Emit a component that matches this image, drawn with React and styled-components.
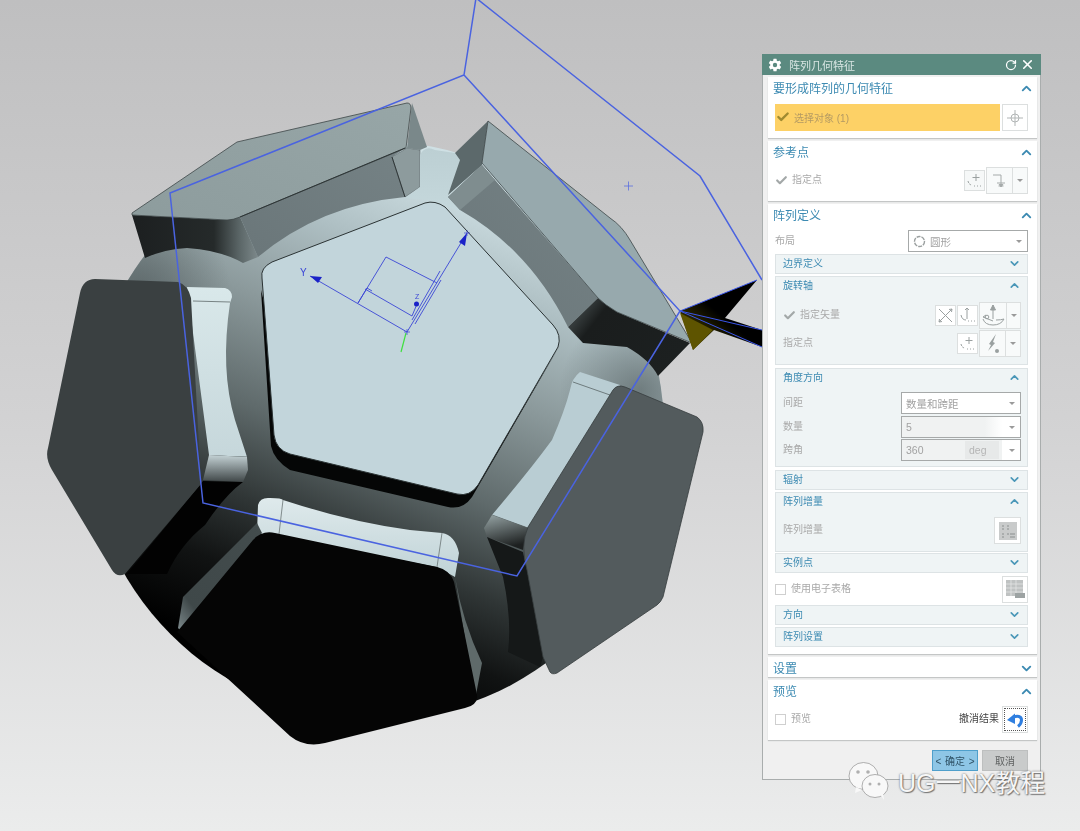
import React from 'react'
import styled, { createGlobalStyle } from 'styled-components'
import { ChevronUp, ChevronDown, RotateCw, X, Check } from 'lucide-react'
import { IoSettingsSharp } from 'react-icons/io5'

const Global = createGlobalStyle`
  html, body { margin: 0; padding: 0; }
  body { font-family: "Liberation Sans", "Noto Sans CJK SC", sans-serif; }
`

const Stage = styled.div`
  position: relative;
  width: 1080px;
  height: 831px;
  overflow: hidden;
  background: linear-gradient(180deg, #bfbfc0 0%, #d2d2d3 50%, #ebecec 100%);
`
const Scene = styled.svg`
  display: block;
  width: 1080px;
  height: 831px;
  filter: blur(0.4px);
`
const Dialog = styled.div`
  position: absolute;
  left: 762px;
  top: 54px;
  width: 279px;
  height: 726px;
  box-sizing: border-box;
  display: flex;
  flex-direction: column;
  background: #f0f0f0;
  border: 1px solid #a9adad;
  border-top: 0;
  filter: blur(0.3px);
`
const TitleBar = styled.div`
  height: 21px;
  flex: none;
  margin: 0 -1px;
  background: #5b8a80;
  display: flex;
  align-items: center;
  padding: 0 6px;
  color: #d9e6e3;
  font-size: 11px;
`
const TitleText = styled.span`
  margin-left: 7px;
  flex: 1;
`
const CloseIcon = styled(X)`
  margin-left: 3px;
`
const Body = styled.div`
  display: flex;
  flex-direction: column;
  gap: 3px;
  padding: 2px 3px 0 5px;
`
const SectionBox = styled.div`
  height: ${p => p.$h}px;
  box-sizing: border-box;
  background: #fff;
  box-shadow: 0 1px 1px #c4c6c6;
  padding: 0 9px 0 7px;
`
const SectionHead = styled.div`
  height: 23px;
  display: flex;
  align-items: center;
  justify-content: space-between;
  margin: 0 -6px 0 -2px;
  color: #3c8ab2;
  font-size: 12px;
`
const HeadText = styled.span`
  padding-bottom: 2px;
`
const SubBox = styled.div`
  height: ${p => p.$h}px;
  box-sizing: border-box;
  background: #eff4f5;
  border: 1px solid #dde3e5;
  padding: 0 6px 0 7px;
  margin-bottom: ${p => p.$gap ?? 2}px;
`
const SubHead = styled.div`
  height: 17px;
  display: flex;
  align-items: center;
  justify-content: space-between;
  color: #3c8ab2;
  font-size: 10px;
`
const SubTitle = styled.span`
  line-height: 1;
`
const Row = styled.div`
  display: flex;
  align-items: center;
  justify-content: space-between;
  height: ${p => p.$h || 22}px;
  margin-top: ${p => p.$top || 0}px;
  margin-bottom: ${p => p.$bottom || 0}px;
`
const Group = styled.div`
  display: flex;
  align-items: center;
  gap: ${p => p.$gap || 1}px;
`
const Label = styled.span`
  font-size: 10px;
  line-height: 1;
  padding-bottom: 1px;
  color: ${p => p.$dark ? '#444' : '#a9a9a9'};
`
const Highlight = styled.div`
  flex: 1;
  height: 27px;
  background: #fdd166;
  display: flex;
  align-items: center;
  gap: 4px;
  padding-left: 1px;
  padding-bottom: 1px;
  box-sizing: border-box;
  font-size: 10px;
  color: #b49a63;
`
const IconBtn = styled.div`
  width: ${p => p.$w || 21}px;
  height: ${p => p.$s || 21}px;
  box-sizing: border-box;
  display: flex;
  align-items: center;
  justify-content: center;
  background: ${p => p.$bg || '#f6f8f8'};
  border: 1px solid #dcdfdf;
`
const BigBtn = styled(IconBtn)`
  width: 26px;
  height: 27px;
  flex: none;
  background: #fff;
  margin-left: 2px;
`
const DottedBtn = styled(BigBtn)`
  outline: 1px dotted #555;
  outline-offset: -3px;
`
const Split = styled.div`
  display: flex;
  width: ${p => p.$w || 42}px;
  height: 27px;
  box-sizing: border-box;
  background: #f8fafa;
  border: 1px solid #dcdfdf;
`
const SplitMain = styled.div`
  flex: 1;
  display: flex;
  align-items: center;
  justify-content: center;
  border-right: 1px solid #dcdfdf;
`
const SplitArrow = styled.div`
  width: 14px;
  display: flex;
  align-items: center;
  justify-content: center;
`
const Caret = styled.span`
  width: 0;
  height: 0;
  border-left: 3px solid transparent;
  border-right: 3px solid transparent;
  border-top: 3px solid #9a9a9a;
`
const Select = styled.div`
  width: ${p => p.$w || 120}px;
  height: ${p => p.$h || 22}px;
  box-sizing: border-box;
  display: flex;
  align-items: center;
  background: ${p => p.$bg || '#fff'};
  border: 1px solid #a6a9a9;
  padding: 0 5px 0 4px;
  font-size: 10.5px;
  color: #a2a2a2;
  gap: 4px;
`
const SelectText = styled.span`
  flex: 1;
`
const Unit = styled.span`
  width: 34px;
  height: 18px;
  line-height: 18px;
  background: #e7e9e9;
  color: #b5b5b5;
  margin-right: 6px;
  padding-left: 4px;
  box-sizing: border-box;
`
const Box = styled.span`
  width: 11px;
  height: 11px;
  box-sizing: border-box;
  background: #fff;
  border: 1px solid #cfcfcf;
  margin-right: 4px;
  flex: none;
`
const Footer = styled.div`
  display: flex;
  justify-content: flex-end;
  gap: 4px;
  margin: 10px 12px 0 0;
`
const DlgButton = styled.div`
  width: 46px;
  height: 21px;
  box-sizing: border-box;
  display: flex;
  align-items: center;
  justify-content: center;
  font-size: 10px;
  color: ${p => p.$primary ? '#2f5266' : '#5f6262'};
  background: ${p => p.$primary ? '#8ec6e6' : '#c9cbcb'};
  border: 1px solid ${p => p.$primary ? '#4f9fcb' : '#bdbfbf'};
  word-spacing: 1px;
`
const Watermark = styled.div`
  position: absolute;
  left: 848px;
  top: 761px;
  display: flex;
  align-items: center;
  gap: 9px;
  font-size: 25px;
  color: #f6f6f6;
  text-shadow: 0 0 2px #5f5f5f, 1px 1px 1px #7d7d7d;
`
const WatermarkIcon = styled.svg`
  width: 41px;
  height: 40px;
  flex: none;
`

const Up = () => <ChevronUp size={15} strokeWidth={3} color="#3c8ab2" />
const Down = () => <ChevronDown size={15} strokeWidth={3} color="#3c8ab2" />
const SubUp = () => <ChevronUp size={13} strokeWidth={3} color="#4a97b8" />
const SubDown = () => <ChevronDown size={13} strokeWidth={3} color="#4a97b8" />

const PointIcon = () => (
  <svg width="17" height="17" viewBox="0 0 17 17" fill="none" stroke="#9aa0a0" strokeWidth="1">
    <path d="M10 2v7M6.500 5.500h7" />
    <path d="M2 9q1 4 4 4M8 14h1M11 14h1M14 14h1" strokeDasharray="2 1" />
  </svg>
)
const CrossIcon = () => (
  <svg width="18" height="18" viewBox="0 0 18 18" fill="none" stroke="#b1b5b5" strokeWidth="1">
    <circle cx="9" cy="9" r="4" />
    <path d="M9 1v16M1 9h16" />
  </svg>
)
const ArrowDownIcon = () => (
  <svg width="18" height="18" viewBox="0 0 18 18" fill="none" stroke="#a5aaaa" strokeWidth="1">
    <path d="M2 3h8v9M6 11h8M7.500 14h5" />
    <path d="M8 12l2 3 2-3" fill="#a5aaaa" />
  </svg>
)
const ScissorIcon = () => (
  <svg width="15" height="15" viewBox="0 0 15 15" fill="none" stroke="#9aa0a0" strokeWidth="1">
    <path d="M1 1l13 13M14 1L1 14" />
    <path d="M14 1l-3 .5M14 1l-.5 3M1 14l3-.5M1 14l.5-3" />
  </svg>
)
const AxisIcon = () => (
  <svg width="17" height="17" viewBox="0 0 17 17" fill="none" stroke="#9aa0a0" strokeWidth="1">
    <path d="M8 1v11M6 3l2-2 2 2" />
    <path d="M2 8q1 5 5 5M9 14h1M12 14h1M15 14h1" />
  </svg>
)
const VectorIcon = () => (
  <svg width="26" height="24" viewBox="0 0 26 24" fill="none" stroke="#9aa0a0" strokeWidth="1">
    <path d="M13 1v14" />
    <path d="M10.500 6L13 1l2.500 5z" fill="#9aa0a0" />
    <path d="M3 13l10 4M3 13l3-2" />
    <path d="M3 15q2 6 10 6t11-6q-3 1-8 1" />
    <circle cx="7" cy="13" r="1.800" />
  </svg>
)
const PenIcon = () => (
  <svg width="20" height="22" viewBox="0 0 20 22" fill="#9aa0a0">
    <path d="M13 1L6 11l2 1-3 6 7-8-2-1z" />
    <circle cx="14" cy="18" r="2" />
  </svg>
)
const GridIcon = () => (
  <svg width="20" height="20" viewBox="0 0 20 20">
    <rect x="1" y="1" width="18" height="18" fill="#c9cbcb" />
    <path d="M4 5h2M4 8h2M9 5h2M9 8h2M4 13h2M4 16h2M9 13h2M12 16h5M12 13h5" stroke="#a0a4a4" strokeWidth="1.500" />
  </svg>
)
const SheetIcon = () => (
  <svg width="22" height="22" viewBox="0 0 22 22">
    <rect x="2" y="2" width="17" height="16" fill="#bfc2c2" />
    <path d="M2 6h17M2 10h17M2 14h17M7 2v16M12 2v16" stroke="#e3e5e5" strokeWidth="0.800" />
    <path d="M11 15h10v5H11z" fill="#9da3a3" />
  </svg>
)
const UndoIcon = () => (
  <svg width="18" height="16" viewBox="0 0 18 16">
    <path d="M8 5C11 3.500 15.500 4 15.500 8C15.500 11 14 13 12 14.500" fill="none" stroke="#2f7fe0" strokeWidth="3" />
    <path d="M1 8L9 1.500V12z" fill="#2f7fe0" />
  </svg>
)
const RingIcon = () => (
  <svg width="13" height="13" viewBox="0 0 13 13" fill="none">
    <circle cx="6.500" cy="6.500" r="5" stroke="#9a9f9f" strokeWidth="1.400" strokeDasharray="4 1" />
  </svg>
)

const Section = ({ title, open, h, children }) => (
  <SectionBox $h={h}>
    <SectionHead>
      <HeadText>{title}</HeadText>
      {open ? <Up /> : <Down />}
    </SectionHead>
    {children}
  </SectionBox>
)

const Sub = ({ title, open, h, gap, children }) => (
  <SubBox $h={h} $gap={gap}>
    <SubHead>
      <SubTitle>{title}</SubTitle>
      {open ? <SubUp /> : <SubDown />}
    </SubHead>
    {children}
  </SubBox>
)

const SplitBtn = ({ children }) => (
  <Split>
    <SplitMain>{children}</SplitMain>
    <SplitArrow><Caret /></SplitArrow>
  </Split>
)

const GreyCheck = () => <Check size={13} strokeWidth={4} color="#a3a8a8" />

const Model = () => (
  <Scene viewBox="0 0 1080 831">
    <defs>
      <linearGradient id="ball" gradientUnits="userSpaceOnUse" x1="500" y1="200" x2="300" y2="680">
        <stop offset="0" stopColor="#cfe0e4" />
        <stop offset="0.17" stopColor="#aebfc3" />
        <stop offset="0.35" stopColor="#8b999b" />
        <stop offset="0.55" stopColor="#5f6a6b" />
        <stop offset="0.72" stopColor="#2f3535" />
        <stop offset="0.85" stopColor="#111313" />
        <stop offset="1" stopColor="#000" />
      </linearGradient>
      <radialGradient id="rim" gradientUnits="userSpaceOnUse" cx="640" cy="390" r="80">
        <stop offset="0" stopColor="#5f6b6d" stopOpacity="0.75" />
        <stop offset="1" stopColor="#5f6b6d" stopOpacity="0" />
      </radialGradient>
      <radialGradient id="rimLeft" gradientUnits="userSpaceOnUse" cx="140" cy="290" r="90">
        <stop offset="0" stopColor="#596466" stopOpacity="0.8" />
        <stop offset="1" stopColor="#596466" stopOpacity="0" />
      </radialGradient>
      <linearGradient id="topFace" x1="0" y1="1" x2="1" y2="0">
        <stop offset="0" stopColor="#8d9c9d" />
        <stop offset="1" stopColor="#97a6a7" />
      </linearGradient>
      <linearGradient id="darkWall" x1="0" y1="0" x2="1" y2="0">
        <stop offset="0" stopColor="#1c1f20" />
        <stop offset="0.65" stopColor="#252a2a" />
        <stop offset="0.85" stopColor="#5a6566" />
        <stop offset="1" stopColor="#7d898b" />
      </linearGradient>
      <linearGradient id="innerWall" x1="0" y1="1" x2="1" y2="0">
        <stop offset="0" stopColor="#6a7679" />
        <stop offset="1" stopColor="#758285" />
      </linearGradient>
      <linearGradient id="leftWall" x1="0" y1="0" x2="0" y2="1">
        <stop offset="0" stopColor="#d9e8ea" />
        <stop offset="1" stopColor="#c6d7db" />
      </linearGradient>
      <linearGradient id="fadeWall" x1="0" y1="0" x2="0" y2="1">
        <stop offset="0" stopColor="#c4d2d5" />
        <stop offset="1" stopColor="#3f4647" />
      </linearGradient>
      <linearGradient id="fadeWall2" x1="0" y1="0" x2="0.3" y2="1">
        <stop offset="0" stopColor="#97a5a6" />
        <stop offset="1" stopColor="#1d2020" />
      </linearGradient>
      <linearGradient id="sideDark" x1="0" y1="0" x2="1" y2="0.5">
        <stop offset="0" stopColor="#566061" />
        <stop offset="0.3" stopColor="#1a1d1d" />
        <stop offset="1" stopColor="#1c2020" />
      </linearGradient>
      <linearGradient id="botWall" x1="0" y1="0" x2="0" y2="1">
        <stop offset="0" stopColor="#dfeaec" />
        <stop offset="1" stopColor="#bfd2d6" />
      </linearGradient>
      <linearGradient id="botLeft" x1="1" y1="0" x2="0" y2="1">
        <stop offset="0" stopColor="#434c4d" />
        <stop offset="0.8" stopColor="#3f4849" />
        <stop offset="1" stopColor="#7d8a8c" />
      </linearGradient>
      <linearGradient id="neck" x1="0" y1="0" x2="0" y2="1">
        <stop offset="0" stopColor="#bccfd3" />
        <stop offset="1" stopColor="#c5d8dc" />
      </linearGradient>
      <linearGradient id="spike" x1="0" y1="1" x2="1" y2="0">
        <stop offset="0" stopColor="#5e5400" />
        <stop offset="0.5" stopColor="#000" />
        <stop offset="1" stopColor="#000" />
      </linearGradient>
    </defs>

    {/* sphere */}
    <circle cx="375" cy="430" r="289" fill="url(#ball)" />
    <circle cx="375" cy="430" r="289" fill="url(#rim)" />
    <circle cx="375" cy="430" r="289" fill="url(#rimLeft)" />

    {/* top left block */}
    <path d="M132 215 L227 220 L240 217 L258 257 L243 263 Q220 250 187 248 Q165 249 145 258 Z" fill="url(#darkWall)" />
    <path d="M240 217 L405 148 L392 157 L405 197 Q320 205 258 257 Z" fill="url(#innerWall)" />
    <path d="M392 157 L407 148 L420 150 L420 187 L405 197 Z" fill="#8d9b9d" stroke="#3d4546" strokeWidth="0.4" />
    <path d="M407 148 L412 103 L427 147 L420 150 Z" fill="#7a888a" />
    <path d="M132 213 L237 142 L407 103 Q411 103 411 108 L406 148 L240 217 Q233 220 227 220 L132 215 Z" fill="url(#topFace)" stroke="#3e4647" strokeWidth="0.8" />
    <path d="M240 217 L405 148 M392 157 L405 197" stroke="#2e3536" strokeWidth="1" fill="none" />

    {/* neck between the two top blocks */}
    <path d="M420 187 L420 155 Q425 145 435 150 L455 153 L460 160 Q457 175 448 195 L462 212 L430 200 L405 198 Z" fill="url(#neck)" />

    {/* top right block */}
    <path d="M482 165 L598 298 L568 327 Q530 250 460 210 L448 197 Z" fill="url(#innerWall)" />
    <path d="M488 121 L455 153 L460 160 L448 195 L482 165 Z" fill="#5c696b" />
    <path d="M482 165 L448 197 L460 210 L495 180 Z" fill="#7f8d8f" />
    <path d="M598 298 L617 312 L690 343 L658 376 Q650 360 627 347 L583 343 L568 327 Z" fill="url(#sideDark)" />
    <path d="M488 121 L610 218 Q622 226 630 240 L692 343 L617 312 Q605 305 598 298 L482 163 Z" fill="#97a9ad" stroke="#3e4647" strokeWidth="0.8" />

    {/* centre pentagon with its recess */}
    <path d="M261 290 L271 446 Q274 460 290 470 L448 507 Q463 510 472 497 L560 345 L480 480 L300 445 Z" fill="#050606" />
    <path d="M262 278 Q260 268 272 262 L425 203 Q435 200 445 207 L553 325 Q562 335 558 347 L478 485 Q470 497 457 494 L290 454 Q276 450 274 435 Z" fill="#c2d5db" stroke="#2b3334" strokeWidth="1" />

    {/* left block */}
    <path d="M187 287 L225 288 Q232 290 232 297 L230 303 Q220 370 235 420 L247 457 L209 455 Z" fill="url(#leftWall)" />
    <path d="M193 301 L230 302 M209 456 L247 457" stroke="#4e5758" strokeWidth="0.7" fill="none" />
    <path d="M209 455 L247 457 L248 470 L243 482 L203 480 Z" fill="url(#fadeWall)" />
    <path d="M203 481 L243 482 Q225 495 205 525 Q180 545 167 574 L127 574 Z" fill="#020202" />
    <path d="M80 293 Q83 279 95 279 L178 282 Q188 285 191 298 L201 484 L125 574 Q117 578 112 570 L52 470 Q45 458 48 448 Z" fill="#3a4041" />

    {/* right block */}
    <path d="M580 372 L620 385 L528 528 L492 515 Q530 470 552 440 Q565 410 570 390 Q572 378 580 372 Z" fill="#b9cdd3" />
    <path d="M573 382 L610 395 M492 515 L528 528" stroke="#4e5758" strokeWidth="0.7" fill="none" />
    <path d="M492 515 L528 528 L523 550 L487 537 L484 528 Z" fill="url(#fadeWall2)" />
    <path d="M487 537 L523 552 L527 570 L543 657 L540 667 L508 652 Q512 620 503 577 Z" fill="#151818" />
    <path d="M613 390 Q617 384 625 387 L697 417 Q704 422 703 432 L663 597 Q661 602 657 605 L557 673 Q552 675 550 672 L543 657 L527 570 Q520 545 528 527 Z" fill="#535b5d" stroke="#363c3d" strokeWidth="0.8" />

    {/* bottom block */}
    <path d="M257 533 L258 505 Q260 497 270 498 Q282 498 283 500 Q350 522 410 530 L442 533 Q455 535 459 553 L455 577 L437 567 Z" fill="url(#botWall)" />
    <path d="M283 500 L279 534 M442 533 L437 567" stroke="#5b6566" strokeWidth="0.7" fill="none" />
    <path d="M257 523 L262 533 L180 630 L178 628 L183 597 Z" fill="url(#botLeft)" />
    <path d="M455 577 Q462 620 482 663 L475 700 Z" fill="#5f6a6a" />
    <path d="M177 632 L253 540 Q262 530 275 533 L437 567 Q450 570 454 582 L477 695 Q478 705 465 708 L325 743 Q305 748 290 736 Z" fill="#050505" />

    {/* yellow preview spike */}
    <path d="M680 311 L757 280 L725 318 L762 330 L762 347 L714 330 L693 350 Z" fill="url(#spike)" />
    <path d="M680 313 L713 330 L693 350 Z" fill="#5e5400" />
    <path d="M680 311 L757 280 M680 311 L762 330 M680 311 L762 347" stroke="#3a55e8" strokeWidth="1" fill="none" />

    {/* blue preview outline */}
    <path d="M476 -2 L464 75 L170 193 L203 503 L517 576 L680 311 L464 75 M476 -2 L700 176 L762 280" fill="none" stroke="#4a63e0" strokeWidth="1.500" />
    <path d="M624 186h9M628.500 181.500v9" stroke="#5a6ee0" strokeWidth="0.800" />

    {/* datum csys */}
    <g fill="none" stroke="#3a45d6" strokeWidth="0.900">
      <path d="M407 332 L310 276" />
      <path d="M407 332 L467 233" />
      <path d="M358 303 L386 257 L437 283" />
      <path d="M365 289 L412 316" />
      <path d="M358 303 L367 288 L372 291" />
      <path d="M412 320 L440 271 M415 324 L441 280" />
      <path d="M412 316 L417 304" />
    </g>
    <path d="M310 276 L322 277 L318 283 Z" fill="#1a22c8" />
    <path d="M467 233 L465 246 L459 242 Z" fill="#1a22c8" />
    <path d="M414 304 a2.500 2.500 0 1 1 5 0 a2.500 2.500 0 1 1 -5 0" fill="#1a22c8" />
    <path d="M406 333 L401 352" stroke="#3fe03f" strokeWidth="1.200" />
    <text x="300" y="276" fontSize="10" fill="#3a45d6" fontFamily="Liberation Sans">Y</text>
    <text x="415" y="299" fontSize="7" fill="#3a45d6" fontFamily="Liberation Sans">Z</text>
    <path d="M464 233h6M467 230v6M404 332h6M407 329v6" stroke="#3a45d6" strokeWidth="0.700" />
  </Scene>
)

const App = () => (
  <Stage>
    <Global />
    <Model />
    <Dialog>
      <TitleBar>
        <IoSettingsSharp size={14} color="#fff" />
        <TitleText>阵列几何特征</TitleText>
        <RotateCw size={12} strokeWidth={2.500} color="#fff" />
        <CloseIcon size={15} strokeWidth={2.500} color="#fff" />
      </TitleBar>
      <Body>
        <Section title="要形成阵列的几何特征" open h={61}>
          <Row $h={27} $top={4}>
            <Highlight>
              <Check size={14} strokeWidth={4} color="#a08a30" />
              选择对象 (1)
            </Highlight>
            <BigBtn><CrossIcon /></BigBtn>
          </Row>
        </Section>

        <Section title="参考点" open h={60}>
          <Row $h={27} $top={3}>
            <Group $gap={4}>
              <GreyCheck />
              <Label>指定点</Label>
            </Group>
            <Group>
              <IconBtn><PointIcon /></IconBtn>
              <SplitBtn><ArrowDownIcon /></SplitBtn>
            </Group>
          </Row>
        </Section>

        <Section title="阵列定义" open h={450}>
          <Row $h={22} $top={3} $bottom={2}>
            <Label>布局</Label>
            <Select>
              <RingIcon />
              <SelectText>圆形</SelectText>
              <Caret />
            </Select>
          </Row>
          <Sub title="边界定义" h={20} />
          <Sub title="旋转轴" open h={89} gap={3}>
            <Row $h={27} $top={8}>
              <Group $gap={4}>
                <GreyCheck />
                <Label>指定矢量</Label>
              </Group>
              <Group>
                <IconBtn $bg="#fff"><ScissorIcon /></IconBtn>
                <IconBtn $bg="#fff"><AxisIcon /></IconBtn>
                <SplitBtn><VectorIcon /></SplitBtn>
              </Group>
            </Row>
            <Row $h={27} $top={1}>
              <Label>指定点</Label>
              <Group>
                <IconBtn $bg="#fff"><PointIcon /></IconBtn>
                <SplitBtn><PenIcon /></SplitBtn>
              </Group>
            </Row>
          </Sub>
          <Sub title="角度方向" open h={99} gap={3}>
            <Row $h={22} $top={6}>
              <Label>间距</Label>
              <Select>
                <SelectText>数量和跨距</SelectText>
                <Caret />
              </Select>
            </Row>
            <Row $h={22} $top={2}>
              <Label>数量</Label>
              <Select $bg="linear-gradient(90deg,#f0f2f2 70%,#fff 85%)">
                <SelectText>5</SelectText>
                <Caret />
              </Select>
            </Row>
            <Row $h={22} $top={1}>
              <Label>跨角</Label>
              <Select $bg="linear-gradient(90deg,#f0f2f2 85%,#fff 85%)">
                <SelectText>360</SelectText>
                <Unit>deg</Unit>
                <Caret />
              </Select>
            </Row>
          </Sub>
          <Sub title="辐射" h={20} />
          <Sub title="阵列增量" open h={60} gap={1}>
            <Row $h={27} $top={7}>
              <Label>阵列增量</Label>
              <IconBtn $w={27} $s={27} $bg="#fff"><GridIcon /></IconBtn>
            </Row>
          </Sub>
          <Sub title="实例点" h={20} gap={3} />
          <Row $h={26} $bottom={3}>
            <Group>
              <Box />
              <Label>使用电子表格</Label>
            </Group>
            <BigBtn><SheetIcon /></BigBtn>
          </Row>
          <Sub title="方向" h={20} />
          <Sub title="阵列设置" h={20} />
        </Section>

        <Section title="设置" h={20} />

        <Section title="预览" open h={60}>
          <Row $h={27} $top={3}>
            <Group>
              <Box />
              <Label>预览</Label>
            </Group>
            <Group>
              <Label $dark>撤消结果</Label>
              <DottedBtn><UndoIcon /></DottedBtn>
            </Group>
          </Row>
        </Section>
      </Body>
      <Footer>
        <DlgButton $primary>&lt; 确定 &gt;</DlgButton>
        <DlgButton>取消</DlgButton>
      </Footer>
    </Dialog>
    <Watermark>
      <WatermarkIcon viewBox="0 0 41 40">
        <ellipse cx="15.500" cy="15" rx="14.500" ry="13.500" fill="#f8f8f8" stroke="#8f8f8f" strokeWidth="0.700" />
        <path d="M8 26l-1 6 7-3z" fill="#f8f8f8" />
        <ellipse cx="27" cy="25" rx="13" ry="11.500" fill="#f8f8f8" stroke="#8f8f8f" strokeWidth="0.700" />
        <path d="M32 33l4 6-1-8z" fill="#f8f8f8" />
        <circle cx="10" cy="11" r="1.800" fill="#b0b0b0" />
        <circle cx="20" cy="11" r="1.800" fill="#b0b0b0" />
        <circle cx="22" cy="23" r="1.500" fill="#b0b0b0" />
        <circle cx="31" cy="23" r="1.500" fill="#b0b0b0" />
      </WatermarkIcon>
      <span>UG一NX教程</span>
    </Watermark>
  </Stage>
)

export default App
